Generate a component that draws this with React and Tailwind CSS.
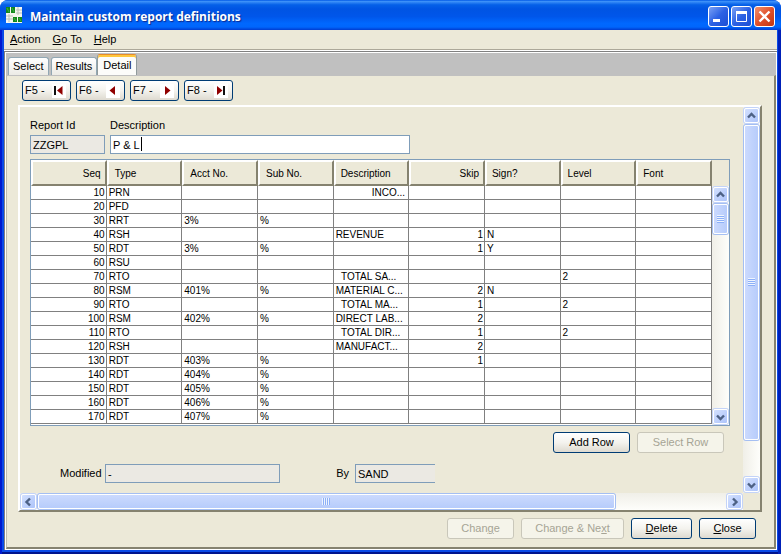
import React from 'react';
import { clsx } from 'clsx';

const columns = [
    { key: 'seq', label: 'Seq', right: true },
    { key: 'type', label: 'Type' },
    { key: 'acct', label: 'Acct No.' },
    { key: 'sub', label: 'Sub No.' },
    { key: 'desc', label: 'Description', tight: true },
    { key: 'skip', label: 'Skip', right: true },
    { key: 'sign', label: 'Sign?', tight: true },
    { key: 'level', label: 'Level', tight: true },
    { key: 'font', label: 'Font', tight: true },
];

const rows = [
    { seq: 10, type: 'PRN', desc: '             INCO...' },
    { seq: 20, type: 'PFD' },
    { seq: 30, type: 'RRT', acct: '3%', sub: '%' },
    { seq: 40, type: 'RSH', desc: 'REVENUE', skip: 1, sign: 'N' },
    { seq: 50, type: 'RDT', acct: '3%', sub: '%', skip: 1, sign: 'Y' },
    { seq: 60, type: 'RSU' },
    { seq: 70, type: 'RTO', desc: '  TOTAL SA...', level: 2 },
    { seq: 80, type: 'RSM', acct: '401%', sub: '%', desc: 'MATERIAL C...', skip: 2, sign: 'N' },
    { seq: 90, type: 'RTO', desc: '  TOTAL MA...', skip: 1, level: 2 },
    { seq: 100, type: 'RSM', acct: '402%', sub: '%', desc: 'DIRECT LAB...', skip: 2 },
    { seq: 110, type: 'RTO', desc: '  TOTAL DIR...', skip: 1, level: 2 },
    { seq: 120, type: 'RSH', desc: 'MANUFACT...', skip: 2 },
    { seq: 130, type: 'RDT', acct: '403%', sub: '%', skip: 1 },
    { seq: 140, type: 'RDT', acct: '404%', sub: '%' },
    { seq: 150, type: 'RDT', acct: '405%', sub: '%' },
    { seq: 160, type: 'RDT', acct: '406%', sub: '%' },
    { seq: 170, type: 'RDT', acct: '407%', sub: '%' },
];

const chevrons = {
    up: 'M3 7.5 L6.5 4 L10 7.5',
    down: 'M3 4.5 L6.5 8 L10 4.5',
    left: 'M8 2.5 L4.5 6 L8 9.5',
    right: 'M5 2.5 L8.5 6 L5 9.5',
};

const ArrowButton = ({ dir }) => (
    <button
        aria-label={`Scroll ${dir}`}
        className="flex size-[15px] shrink-0 items-center justify-center rounded-xs border border-white bg-linear-to-br from-[#d3e0fe] to-[#adc4fa] ring-1 ring-[#c3d3f8]"
    >
        <svg width="13" height="12" viewBox="0 0 13 12" className="shrink-0" fill="none" stroke="#4d6185" strokeWidth="2.4">
            <path d={chevrons[dir]} />
        </svg>
    </button>
);

const Grip = ({ vertical }) => (
    <span className={clsx('flex gap-px', vertical ? 'flex-col' : 'flex-row')}>
        {[0, 1, 2, 3].map((n) => (
            <span
                key={n}
                className={clsx(
                    'bg-[#8cb0f8]',
                    vertical ? 'h-px w-[7px] shadow-[0_-1px_0_#eef4fe]' : 'h-[7px] w-px shadow-[-1px_0_0_#eef4fe]'
                )}
            />
        ))}
    </span>
);

const ScrollBar = ({ vertical, thumb }) => (
    <div
        className={clsx(
            'flex shrink-0 items-center gap-0.5 p-px',
            vertical
                ? 'w-[17px] flex-col bg-linear-to-r from-[#f0efe8] to-[#fefefb]'
                : 'h-[17px] bg-linear-to-b from-[#f0efe8] to-[#fefefb]'
        )}
    >
        <ArrowButton dir={vertical ? 'up' : 'left'} />
        <div className={clsx('flex min-h-0 min-w-0 flex-1', vertical ? 'w-[15px] flex-col' : 'h-[15px]')}>
            <div
                className={clsx(
                    'flex items-center justify-center rounded-xs border border-white from-[#cbdafe] to-[#b7ccfb] ring-1 ring-[#a5bff2]',
                    vertical ? 'bg-linear-to-r' : 'bg-linear-to-b',
                    thumb
                )}
            >
                <Grip vertical={vertical} />
            </div>
        </div>
        <ArrowButton dir={vertical ? 'down' : 'right'} />
    </div>
);

const PushButton = ({ disabled, className, children }) => (
    <button
        disabled={disabled}
        className={clsx(
            'h-[21px] rounded-[3px] border text-center',
            disabled
                ? 'border-[#c9c7ba] bg-[#f5f4ea] text-[#a6a495]'
                : 'border-[#003c74] bg-linear-to-b from-white via-[#f4f3ee] to-[#dedad0]',
            className
        )}
    >
        {children}
    </button>
);

const navButtons = [
    { label: 'F5 -', bar: 'M2 1h2v9H2z', arrow: 'M10.5 1v9L5 5.5z' },
    { label: 'F6 -', arrow: 'M9 1v9L3.5 5.5z' },
    { label: 'F7 -', arrow: 'M5 1v9l5.5-4.5z' },
    { label: 'F8 -', bar: 'M9 1h2v9H9z', arrow: 'M3 1v9l5.5-4.5z' },
];

const Tab = ({ active, children }) => (
    <button
        role="tab"
        aria-selected={!!active}
        className={clsx(
            'rounded-t-[3px] border border-b-0',
            active
                ? '-ml-0.5 h-[21px] border-[#919b9c] border-t-[#e68b2c] bg-[#fcfcfa] px-[5px] shadow-[inset_0_2px_0_#ffc73c]'
                : 'h-[18px] border-[#91a7b4] bg-linear-to-b from-white to-[#ecebe6] px-1'
        )}
    >
        {children}
    </button>
);

const Field = ({ id, className, value, readOnly }) => (
    <input
        id={id}
        defaultValue={value}
        readOnly={readOnly}
        className={clsx('block h-[19px] border border-[#7f9db9] px-0.5', readOnly ? 'bg-[#ebe9e3]' : 'bg-white', className)}
    />
);

const TitleButton = ({ label, close, children }) => (
    <button
        aria-label={label}
        className={clsx(
            'flex size-[21px] items-center justify-center rounded-[3px] border border-white bg-linear-to-br',
            close ? 'from-[#f0906c] via-[#e1502a] to-[#c03510]' : 'from-[#7ba0f4] via-[#2c61e4] to-[#1c4fd4]'
        )}
    >
        <svg width="19" height="19" viewBox="0 0 19 19" fill="none" stroke="white">
            {children}
        </svg>
    </button>
);

const TitleBar = () => (
    <header className="flex h-[30px] shrink-0 items-center rounded-t-lg bg-[linear-gradient(180deg,#0058e6,#3c90f8_5%,#0560e8_16%,#0054e3_30%,#0056ea_55%,#0068fe_78%,#0066fc_90%,#003cd0)] px-[6px]">
        <svg width="16" height="16" viewBox="0 0 16 16">
            <path d="M0 0h16v16H0z" fill="#f4f6f0" />
            <path d="M10 3h6M10 6h6M0 9h7M0 12h7M3 7v8M12 0v8" stroke="#b9c2b6" fill="none" />
            <path d="M0 0h4v6H0zM5 0h4v6H5zM7 10h4v5H7zM12 10h4v5h-4z" fill="#12891c" />
            <path d="M1 1l2 4M6 1l2 4M8 11l2 3M13 11l2 3" stroke="#3fae44" />
        </svg>
        <h1 className="flex-1 pt-[3px] pl-2 font-['Open_Sans','Noto_Sans',sans-serif] text-[12px] font-bold text-white [text-shadow:1px_1px_1px_#0a2a90]">
            Maintain custom report definitions
        </h1>
        <div className="flex gap-0.5 pt-0.5">
            <TitleButton label="Minimize">
                <path d="M4 13.5h7" strokeWidth="3" />
            </TitleButton>
            <TitleButton label="Maximize">
                <path d="M4.5 5v9.5h10V5" />
                <path d="M4 5.5h11" strokeWidth="3" />
            </TitleButton>
            <TitleButton label="Close" close>
                <path d="M4.5 4.5l10 10M14.5 4.5l-10 10" strokeWidth="2.4" />
            </TitleButton>
        </div>
    </header>
);

const ReportTable = () => (
    <div className="flex border border-[#7f9db9]">
        <div className="flex-1 bg-white pb-px">
            <table className="w-full table-fixed border-separate border-spacing-0 text-[10px]/[13px]">
                <thead>
                    <tr className="h-[26px]">
                        {columns.map((col) => (
                            <th
                                key={col.key}
                                className={clsx(
                                    'border-2 border-t-white border-r-[#85826f] border-b-[#85826f] border-l-white bg-[#ece9d8] p-0 font-normal',
                                    col.right ? 'pr-1 text-right' : col.tight ? 'pl-[5px] text-left' : 'pl-1.5 text-left'
                                )}
                            >
                                {col.label}
                            </th>
                        ))}
                    </tr>
                </thead>
                <tbody>
                    {rows.map((row) => (
                        <tr key={row.seq} className="h-[14px]">
                            {columns.map((col) => (
                                <td
                                    key={col.key}
                                    className={clsx(
                                        'overflow-hidden border-r border-b border-[#808080] py-0 pr-px pl-0.5 whitespace-pre',
                                        col.right && 'text-right'
                                    )}
                                >
                                    {row[col.key]}
                                </td>
                            ))}
                        </tr>
                    ))}
                </tbody>
            </table>
        </div>
        <div className="flex flex-col">
            <div className="h-[26px]" />
            <div className="flex flex-1">
                <ScrollBar vertical thumb="h-[30px]" />
            </div>
        </div>
    </div>
);

const App = () => {
    return (
        <div className="flex min-h-screen flex-col rounded-t-lg bg-[#0a44e0] font-['Liberation_Sans',Arial,sans-serif] text-[11px] text-black">
            <TitleBar />
            <div className="flex flex-1 bg-[#0a4ae6] px-1 pb-1 shadow-[inset_2px_0_0_#0019cf,inset_-3px_0_0_#0020b8,inset_0_-2px_0_#00138c]">
                <div className="flex flex-1 flex-col bg-[#ece9d8]">
                    <nav className="flex h-[19px] items-center gap-3 px-[6px]">
                        <button><u>A</u>ction</button>
                        <button><u>G</u>o To</button>
                        <button><u>H</u>elp</button>
                    </nav>
                    <div className="flex flex-1 flex-col border-t border-[#aca899] bg-white pt-px">
                        <div className="flex flex-1 flex-col border-t border-l border-[#808080] bg-white pt-px pr-px pb-px pl-px">
                            <div role="tablist" className="flex h-[22px] items-end gap-0.5 bg-[#c0c0c0] pl-0.5">
                                <Tab>Select</Tab>
                                <Tab>Results</Tab>
                                <Tab active>Detail</Tab>
                            </div>
                            <main className="flex flex-1 flex-col border-t border-r-2 border-b-2 border-l border-t-[#c0c0c0] border-r-[#85826f] border-b-[#85826f] border-l-[#c0bdb0] bg-[#ece9d8] pt-1 pr-3 pb-2 pl-[11px]">
                                <div className="flex gap-[5px] pl-1">
                                    {navButtons.map((btn) => (
                                        <PushButton key={btn.label} className="flex w-[49px] items-center justify-between px-0.5">
                                            {btn.label}
                                            <svg width="14" height="14" viewBox="0 -1 14 14" className="mr-0.5 bg-white">
                                                {btn.bar && <path d={btn.bar} fill="#111" />}
                                                <path d={btn.arrow} fill="#900000" />
                                            </svg>
                                        </PushButton>
                                    ))}
                                </div>
                                <section className="mt-1 flex flex-1 flex-col border-2 border-t-white border-r-[#85826f] border-b-[#85826f] border-l-white">
                                    <div className="flex flex-1">
                                        <div className="flex flex-1 flex-col pr-[13px] pl-[10px]">
                                            <div className="flex gap-[5px] pt-[10px]">
                                                <div className="flex flex-col">
                                                    <label htmlFor="report-id" className="h-[18px] leading-4">Report Id</label>
                                                    <Field id="report-id" value="ZZGPL" readOnly className="w-[75px]" />
                                                </div>
                                                <div className="flex flex-col">
                                                    <label htmlFor="description" className="h-[18px] leading-4">Description</label>
                                                    <div className="relative">
                                                        <Field id="description" value="P & L" className="w-[300px]" />
                                                        <span className="absolute top-[2px] left-[31px] h-[14px] w-px bg-black" />
                                                    </div>
                                                </div>
                                            </div>
                                            <div className="mt-[5px]">
                                                <ReportTable />
                                            </div>
                                            <div className="mt-1.5 flex justify-end gap-[7px] pr-1.5">
                                                <PushButton className="w-[77px]">Add Row</PushButton>
                                                <PushButton className="w-[87px]" disabled>Select Row</PushButton>
                                            </div>
                                            <div className="mt-[11px] flex items-center pl-[30px]">
                                                <label htmlFor="modified" className="w-[45px]">Modified</label>
                                                <Field id="modified" value="-" readOnly className="w-[175px]" />
                                                <label htmlFor="by" className="w-[75px] pr-[6px] text-right">By</label>
                                                <Field id="by" value="SAND" readOnly className="w-20 border-r-0" />
                                            </div>
                                        </div>
                                        <ScrollBar vertical thumb="h-[90%]" />
                                    </div>
                                    <div className="flex pr-[17px]">
                                        <div className="flex-1">
                                            <ScrollBar thumb="w-[84%]" />
                                        </div>
                                    </div>
                                </section>
                                <div className="mt-[6px] flex justify-end gap-[7px] pr-[6px]">
                                    <PushButton className="w-[67px]" disabled>Chan<u>g</u>e</PushButton>
                                    <PushButton className="w-[103px]" disabled>Change & Ne<u>x</u>t</PushButton>
                                    <PushButton className="w-[61px]"><u>D</u>elete</PushButton>
                                    <PushButton className="w-[57px]"><u>C</u>lose</PushButton>
                                </div>
                            </main>
                        </div>
                    </div>
                </div>
            </div>
        </div>
    );
};

export default App;
